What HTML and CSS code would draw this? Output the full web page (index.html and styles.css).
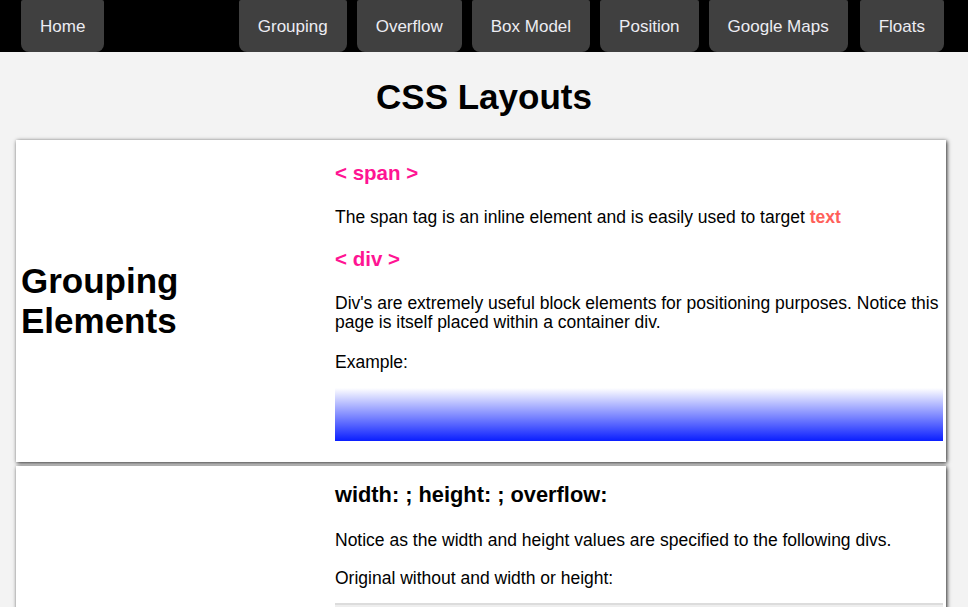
FILE: index.html
```html
<!DOCTYPE html>
<html lang="en">
<head>
<meta charset="utf-8">
<title>CSS Layouts</title>
<link rel="stylesheet" href="styles.css">
</head>
<body>
<nav class="topnav">
  <a class="navbtn home" href="#">Home</a>
  <a class="navbtn" href="#">Grouping</a>
  <a class="navbtn" href="#">Overflow</a>
  <a class="navbtn" href="#">Box Model</a>
  <a class="navbtn" href="#">Position</a>
  <a class="navbtn" href="#">Google Maps</a>
  <a class="navbtn floats" href="#">Floats</a>
</nav>
<h1 class="page-title">CSS Layouts</h1>
<main class="container">
  <section class="card">
    <div class="card-side"><h2 class="side-title">Grouping<br>Elements</h2></div>
    <div class="card-body">
      <h3 class="tag-title">&lt; span &gt;</h3>
      <p class="text">The span tag is an inline element and is easily used to target <span class="hl">text</span></p>
      <h3 class="tag-title">&lt; div &gt;</h3>
      <p class="text">Div's are extremely useful block elements for positioning purposes. Notice this page is itself placed within a container div.</p>
      <p class="text example">Example:</p>
      <div class="gradient-box"></div>
    </div>
  </section>
  <section class="card">
    <div class="card-side"><h2 class="side-title">Sizing<br>Elements</h2></div>
    <div class="card-body body2">
      <h3 class="prop-title">width: ; height: ; overflow:</h3>
      <p class="text first">Notice as the width and height values are specified to the following divs.</p>
      <p class="text">Original without and width or height:</p>
      <div class="demo-box">Lorem ipsum dolor sit amet, consectetur adipiscing elit. Sed do eiusmod tempor incididunt ut labore et dolore magna aliqua. Ut enim ad minim veniam, quis nostrud exercitation ullamco laboris nisi ut aliquip ex ea commodo consequat.</div>
      <p class="text">With width and height:</p>
      <div class="demo-box sized">Lorem ipsum dolor sit amet, consectetur adipiscing elit. Sed do eiusmod tempor incididunt ut labore et dolore magna aliqua. Ut enim ad minim veniam, quis nostrud exercitation ullamco laboris nisi ut aliquip ex ea commodo consequat.</div>
      <p class="text">With overflow: hidden:</p>
      <div class="demo-box sized hidden">Lorem ipsum dolor sit amet, consectetur adipiscing elit. Sed do eiusmod tempor incididunt ut labore et dolore magna aliqua. Ut enim ad minim veniam, quis nostrud exercitation ullamco laboris nisi ut aliquip ex ea commodo consequat.</div>
      <p class="text">With overflow: scroll:</p>
      <div class="demo-box sized">Lorem ipsum dolor sit amet, consectetur adipiscing elit. Sed do eiusmod tempor incididunt ut labore et dolore magna aliqua. Ut enim ad minim veniam, quis nostrud exercitation ullamco laboris nisi ut aliquip ex ea commodo consequat.</div>
    </div>
  </section>
</main>
</body>
</html>
```
FILE: styles.css
```css
* { box-sizing: border-box; }
html, body { margin: 0; padding: 0; }
body {
  background: #f3f3f3;
  font-family: "Liberation Sans", Arial, Helvetica, sans-serif;
  color: #000;
}
.topnav {
  background: #000;
  height: 52px;
  display: flex;
  gap: 10px;
  padding: 0 24px 0 21px;
}
.navbtn {
  display: flex;
  align-items: center;
  height: 52px;
  padding: 1px 19px 0;
  background: #404040;
  color: #ececf2;
  text-decoration: none;
  font-size: 17px;
  border-radius: 2px 2px 8px 8px;
}
.navbtn.home { margin-right: auto; }
.navbtn.floats { margin-left: 2px; }
.page-title {
  margin: 0;
  padding: 25px 0 23px;
  text-align: center;
  font-size: 35px;
  line-height: 40px;
  font-weight: bold;
}
.container {
  padding: 0 22px 0 16px;
  display: flex;
  flex-direction: column;
  gap: 4px;
}
.card {
  background: #fff;
  display: grid;
  grid-template-columns: 319px 1fr;
  box-shadow: 1px 1px 4px rgba(0, 0, 0, 0.85);
}
.card-side {
  display: flex;
  align-items: center;
  padding-left: 5px;
}
.side-title {
  margin: 0;
  font-size: 35px;
  line-height: 40px;
  font-weight: bold;
}
.card-body {
  padding: 21px 3px 21px 0;
  display: flex;
  flex-direction: column;
  gap: 22px;
}
.tag-title {
  margin: 0;
  color: #ff1493;
  font-size: 20.5px;
  line-height: 23px;
  font-weight: bold;
}
.text {
  margin: 0;
  font-size: 17.5px;
  line-height: 19px;
}
.tag-title + .text { margin-top: 2px; }
.text + .tag-title { margin-top: -2px; }
.text.example { margin-top: -1px; }
.hl { color: #ff5f5a; font-weight: bold; }
.gradient-box {
  margin-top: -6px;
  height: 53px;
  background: linear-gradient(to bottom, #ffffff, #0a1eff);
}
.body2 { padding-top: 17px; gap: 19px; }
.prop-title {
  margin: 0;
  font-size: 21.8px;
  line-height: 24px;
  font-weight: bold;
}
.text.first { margin-top: 5px; }
.demo-box {
  border-top: 2px solid #dcdcdc;
  background: #eee;
  padding: 10px;
  font-size: 17.5px;
  line-height: 19px;
  margin-top: -4px;
}
.demo-box.sized { width: 300px; height: 80px; overflow: scroll; margin-top: -2px; }
.demo-box.hidden { overflow: hidden; }
```
